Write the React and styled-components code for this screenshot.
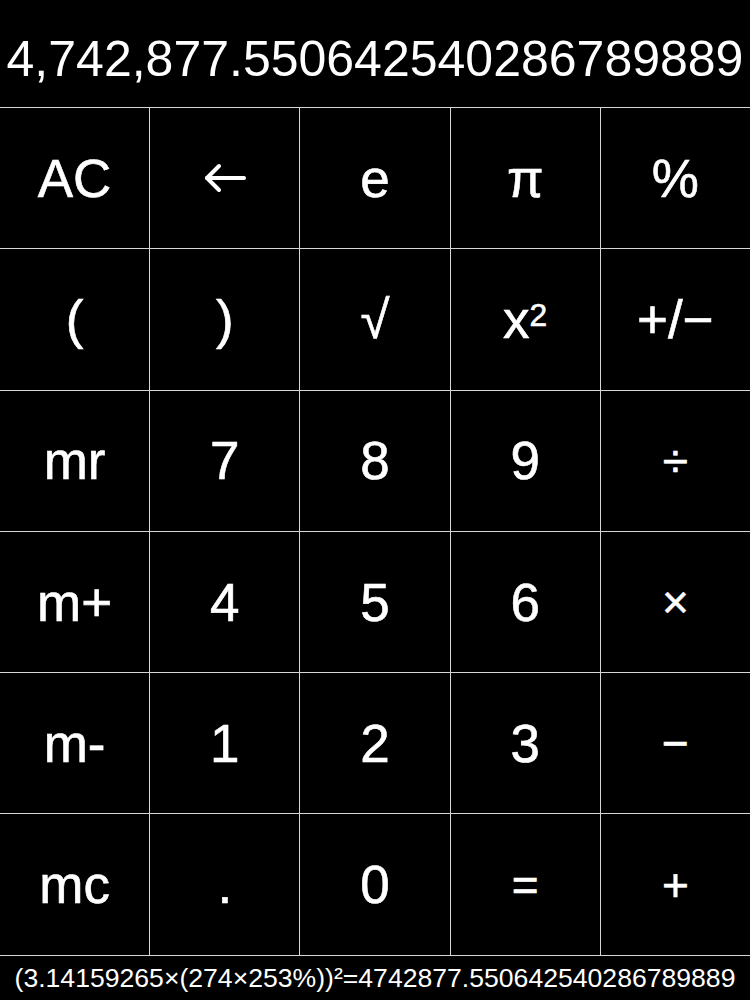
import React from 'react'
import styled, { createGlobalStyle } from 'styled-components'

const Global = createGlobalStyle`
    html, body {
        margin: 0;
        padding: 0;
        background: #000;
    }
    body {
        font-family: "Liberation Sans", Arial, sans-serif;
        color: #fff;
    }
`

const Screen = styled.div`
    width: 750px;
    height: 1000px;
    background: #000;
    display: flex;
    flex-direction: column;
    overflow: hidden;
`

const Display = styled.div`
    height: 107px;
    box-sizing: border-box;
    padding-top: 34px;
    font-size: 50px;
    line-height: 50px;
    text-align: center;
    white-space: nowrap;
`

const Keypad = styled.div`
    display: grid;
    grid-template-columns: repeat(5, 1fr);
    grid-template-rows: repeat(6, 140.3px);
    gap: 1px;
    background: #d6d6d6;
    border-top: 1px solid #d6d6d6;
    border-bottom: 1px solid #d6d6d6;
`

const Key = styled.button`
    background: #000;
    color: #fff;
    border: none;
    margin: 0;
    padding: 0;
    display: flex;
    align-items: center;
    justify-content: center;
    font-family: "Liberation Sans", Arial, sans-serif;
    font-size: ${props => props.small ? '46px' : '53px'};
    line-height: 1;
    -webkit-text-stroke: 0.6px #fff;
    cursor: pointer;

    sup {
        font-size: 0.6em;
        line-height: 0;
        position: relative;
        top: -0.15em;
    }
`

const Formula = styled.div`
    flex: 1;
    box-sizing: border-box;
    padding-top: 9px;
    font-size: 26.6px;
    line-height: 26px;
    text-align: center;
    white-space: nowrap;
`

function BackArrow() {
    return (
        <svg width="44" height="30" viewBox="0 0 44 30" fill="none" stroke="#fff" strokeWidth="4" strokeLinecap="round" strokeLinejoin="round">
            <path d="M41 15H4" />
            <path d="M16 3L4 15L16 27" />
        </svg>
    )
}

const keys = [
    'AC', '←', 'e', 'π', '%',
    '(', ')', '√', 'x2', '+/−',
    'mr', '7', '8', '9', '÷',
    'm+', '4', '5', '6', '×',
    'm-', '1', '2', '3', '−',
    'mc', '.', '0', '=', '+'
]

const smallKeys = ['÷', '×', '−', '+', '=']

function label(k) {
    if (k === '←') return <BackArrow />
    if (k === 'x2') return <>x<sup>2</sup></>
    return k
}

export default function App() {
    return (
        <Screen>
            <Global />
            <Display>4,742,877.550642540286789889</Display>
            <Keypad>
                {keys.map(function (k, i) {
                    return (
                        <Key key={i} small={smallKeys.includes(k)} aria-label={k}>
                            {label(k)}
                        </Key>
                    )
                })}
            </Keypad>
            <Formula>(3.14159265×(274×253%))²=4742877.550642540286789889</Formula>
        </Screen>
    )
}
